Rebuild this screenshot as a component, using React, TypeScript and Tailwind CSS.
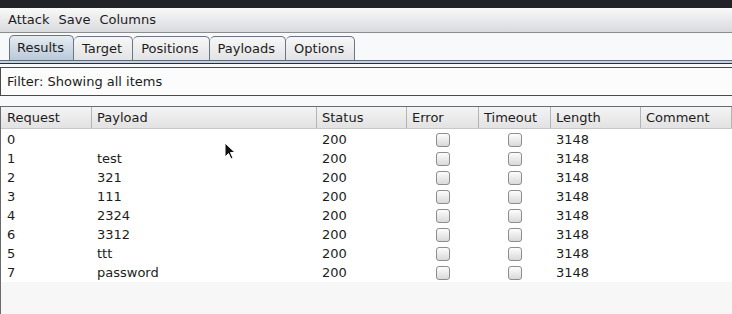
import React from "react";

const tabs = ["Results", "Target", "Positions", "Payloads", "Options"];

const columns = [
  { name: "Request", w: "w-[91px] pl-[6px]" },
  { name: "Payload", w: "w-[225px] pl-[5px]" },
  { name: "Status", w: "w-[90px] pl-[5px]" },
  { name: "Error", w: "w-[72px] pl-[5px]" },
  { name: "Timeout", w: "w-[72px] pl-[5px]" },
  { name: "Length", w: "w-[90px] pl-[5px]" },
  { name: "Comment", w: "flex-1 pl-[5px]" },
];

const rows = [
  { req: "0", payload: "" },
  { req: "1", payload: "test" },
  { req: "2", payload: "321" },
  { req: "3", payload: "111" },
  { req: "4", payload: "2324" },
  { req: "6", payload: "3312" },
  { req: "5", payload: "ttt" },
  { req: "7", payload: "password" },
];

const Check = () => (
  <div className="w-[14px] h-[14px] rounded-[3px] border border-[#8d8d8d] bg-gradient-to-b from-[#fdfdfd] to-[#d9d9d9]" />
);

const Cursor = () => (
  <svg
    className="absolute left-[224px] top-[142px]"
    width="12"
    height="19"
    viewBox="0 0 12 19"
  >
    <path
      d="M1 1 L1 15 L4.5 11.5 L7 17 L9 16 L6.5 10.5 L11 10.5 Z"
      fill="#111"
      stroke="#fff"
      strokeWidth="1"
    />
  </svg>
);

export default function App() {
  return (
    <div className="relative w-[732px] h-[314px] overflow-hidden bg-[#f8f9fa] text-[13px] text-[#1c1c1c] font-['DejaVu_Sans',sans-serif]">
      <div className="h-[8px] bg-[#212329]" />
      <div className="h-[25px] flex items-center gap-[9px] px-[8px] bg-gradient-to-b from-[#f9f9f9] to-[#d9dadd] border-b border-[#8c8c8c]">
        <span>Attack</span>
        <span>Save</span>
        <span>Columns</span>
      </div>
      <div className="flex items-end h-[28px] pl-[9px] bg-[#f8f9fa] border-b border-[#5f6d7b]">
        {tabs.map((t, i) => (
          <div
            key={t}
            className={
              i === 0
                ? "h-[25px] pl-[7px] pr-[9px] flex items-center border border-b-0 border-[#6b7583] rounded-t-[5px] bg-gradient-to-b from-[#e6ecf2] to-[#b9c9d9]"
                : "h-[24px] pl-[8px] pr-[10px] flex items-center border border-l-0 border-b-0 border-[#6b7583] rounded-t-[5px] bg-gradient-to-b from-[#f7f7f7] to-[#e2e3e5]"
            }
          >
            {t}
          </div>
        ))}
      </div>
      <div className="h-[3px] bg-[#c4d2e0] border-b border-[#2d2d2d]" />
      <div className="mt-[3px] h-[29px] flex items-center pl-[6px] border border-r-0 border-[#4a4a4a] bg-[#fcfcfc]">
        Filter: Showing all items
      </div>
      <div className="mt-[10px] border-t border-l border-[#6a6a6a] bg-[#f7f7f7] h-[208px]">
        <div className="flex h-[22px] bg-gradient-to-b from-[#f4f4f4] to-[#e2e2e2] border-b border-[#c8c8c8]">
          {columns.map((c) => (
            <div
              key={c.name}
              className={`${c.w} flex items-center border-r border-[#b4b4b4]`}
            >
              {c.name}
            </div>
          ))}
        </div>
        <div className="bg-white pt-[1px]">
          {rows.map((r) => (
            <div key={r.req + r.payload} className="flex h-[19px] items-center">
              <div className="w-[91px] pl-[6px]">{r.req}</div>
              <div className="w-[225px] pl-[5px]">{r.payload}</div>
              <div className="w-[90px] pl-[5px]">200</div>
              <div className="w-[72px] flex justify-center">
                <Check />
              </div>
              <div className="w-[72px] flex justify-center">
                <Check />
              </div>
              <div className="w-[90px] pl-[5px]">3148</div>
              <div className="flex-1" />
            </div>
          ))}
        </div>
      </div>
      <Cursor />
    </div>
  );
}
